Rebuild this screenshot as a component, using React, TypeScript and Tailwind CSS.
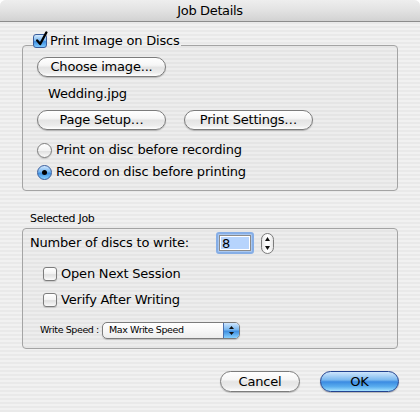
import React from 'react';

const pill =
  'flex items-center justify-center rounded-full border border-[#7c7c7c] bg-[linear-gradient(to_bottom,#ffffff_0%,#f6f6f6_40%,#e4e4e4_52%,#ececec_80%,#ffffff_100%)] shadow-[0_1px_1px_rgba(0,0,0,0.22)] text-black';

const CheckBox: React.FC<{ checked?: boolean }> = ({ checked }) =>
  checked ? (
    <span className="relative block w-[14px] h-[14px] shrink-0 rounded-[3px] border border-[#3a5d9c] bg-[linear-gradient(to_bottom,#d4ebff_0%,#7db9f0_45%,#3f8fe0_55%,#7fcaff_100%)]">
      <svg className="absolute left-[1px] top-[-4px]" width="13" height="16" viewBox="0 0 13 16">
        <path d="M2.2 9.4 L5.2 13 L11.4 1.4" stroke="#000" strokeWidth="2.3" fill="none" strokeLinecap="round" strokeLinejoin="round" />
      </svg>
    </span>
  ) : (
    <span className="block w-[14px] h-[14px] shrink-0 rounded-[3px] border border-[#7d7d7d] bg-[linear-gradient(to_bottom,#ffffff_0%,#f2f2f2_50%,#e0e0e0_55%,#fafafa_100%)] shadow-[0_1px_1px_rgba(0,0,0,0.15)]" />
  );

const Radio: React.FC<{ on?: boolean }> = ({ on }) =>
  on ? (
    <span className="flex items-center justify-center w-[15px] h-[15px] shrink-0 rounded-full border border-[#3a5d9c] bg-[linear-gradient(to_bottom,#cfe7ff_0%,#76b5ef_45%,#3f8fe0_55%,#86d0ff_100%)]">
      <span className="block w-[5px] h-[5px] rounded-full bg-black" />
    </span>
  ) : (
    <span className="block w-[15px] h-[15px] shrink-0 rounded-full border border-[#7d7d7d] bg-[linear-gradient(to_bottom,#ffffff_0%,#f2f2f2_50%,#e0e0e0_55%,#fafafa_100%)] shadow-[0_1px_1px_rgba(0,0,0,0.15)]" />
  );

export default function App() {
  return (
    <div className="w-[420px] h-[412px] bg-white font-['DejaVu_Sans',sans-serif] text-[13px] tracking-[-0.2px] text-black overflow-hidden">
      <div className="w-full h-full rounded-t-[6px] overflow-hidden flex flex-col bg-[repeating-linear-gradient(to_bottom,#f1f1f1_0px,#f1f1f1_2px,#e9e9e9_2px,#e9e9e9_4px)]">
        <div className="h-[22px] shrink-0 flex items-center justify-center border-b border-[#8c8c8c] bg-[linear-gradient(to_bottom,#eeeeee_0%,#e2e2e2_50%,#d2d2d2_100%)] tracking-[-0.35px]">
          Job Details
        </div>

        <fieldset className="mx-[22px] mt-[12px] rounded-[4px] border border-[#a4a4a4] bg-black/[0.015]">
          <legend className="ml-[10px] pb-[8px] pr-[1px]">
            <div className="flex items-center h-[14px] gap-[3px]">
              <CheckBox checked />
              <span>Print Image on Discs</span>
            </div>
          </legend>
          <div className="flex flex-col pl-[14px] pb-[10px]">
            <button className={`${pill} mt-[1px] w-[129px] h-[20px]`}>Choose image...</button>
            <div className="mt-[9px] h-[16px] leading-[16px] pl-[11px]">Wedding.jpg</div>
            <div className="mt-[8px] flex gap-[18px]">
              <button className={`${pill} w-[129px] h-[20px]`}>Page Setup…</button>
              <button className={`${pill} w-[129px] h-[20px]`}>Print Settings…</button>
            </div>
            <div className="mt-[12px] h-[16px] flex items-center gap-[4px]">
              <Radio />
              <span>Print on disc before recording</span>
            </div>
            <div className="mt-[6px] h-[16px] flex items-center gap-[4px]">
              <Radio on />
              <span>Record on disc before printing</span>
            </div>
          </div>
        </fieldset>

        <div className="mx-[22px] mt-[21px] pl-[8px] h-[14px] leading-[14px] text-[11px] tracking-[-0.3px]">Selected Job</div>
        <div className="mx-[22px] mt-[2px] rounded-[4px] border border-[#a4a4a4] bg-black/[0.015] flex flex-col pt-[3px] pb-[9px] pl-[7px]">
          <div className="h-[22px] flex items-center">
            <span className="w-[186px] whitespace-nowrap">Number of discs to write:</span>
            <div className="w-[38px] h-[22px] rounded-[3px] border-[2px] border-[#86aee6] p-[1px] bg-[#aac8f0]">
              <div className="w-full h-full border border-[#8a8a8a] bg-white p-[1px]">
                <div className="w-full h-full bg-[#b6d4fd] flex items-center pl-[1px] leading-none">8</div>
              </div>
            </div>
            <div className="ml-[7px] w-[13px] h-[21px] rounded-full border border-[#7c7c7c] bg-[linear-gradient(to_right,#e6e6e6_0%,#ffffff_40%,#ffffff_60%,#e6e6e6_100%)] flex flex-col items-center justify-center gap-[5px]">
              <svg width="5" height="4" viewBox="0 0 5 4"><path d="M2.5 0 L5 4 L0 4 Z" fill="#111" /></svg>
              <svg width="5" height="4" viewBox="0 0 5 4"><path d="M0 0 L5 0 L2.5 4 Z" fill="#111" /></svg>
            </div>
          </div>
          <div className="mt-[12px] h-[16px] pl-[13px] flex items-center gap-[4px]">
            <CheckBox />
            <span>Open Next Session</span>
          </div>
          <div className="mt-[10px] h-[16px] pl-[13px] flex items-center gap-[4px]">
            <CheckBox />
            <span>Verify After Writing</span>
          </div>
          <div className="mt-[13px] h-[18px] pl-[10px] flex items-center text-[9.5px] tracking-[-0.4px]">
            <span className="w-[62px] shrink-0 whitespace-nowrap">Write Speed :</span>
            <div className="w-[138px] h-[17px] rounded-[5px] border border-[#7c7c7c] bg-[linear-gradient(to_bottom,#ffffff_0%,#f7f7f7_50%,#ececec_100%)] shadow-[0_1px_1px_rgba(0,0,0,0.18)] flex overflow-hidden">
              <span className="flex-1 pl-[6px] flex items-center whitespace-nowrap">Max Write Speed</span>
              <span className="w-[16px] border-l border-[#4a6fae] bg-[linear-gradient(to_bottom,#cfe7ff_0%,#76b5ef_45%,#3f8fe0_55%,#86d0ff_100%)] flex flex-col items-center justify-center gap-[3px]">
                <svg width="5" height="3" viewBox="0 0 5 3"><path d="M2.5 0 L5 3 L0 3 Z" fill="#111" /></svg>
                <svg width="5" height="3" viewBox="0 0 5 3"><path d="M0 0 L5 0 L2.5 3 Z" fill="#111" /></svg>
              </span>
            </div>
          </div>
        </div>

        <div className="mt-[22px] mr-[21px] flex justify-end gap-[20px]">
          <button className={`${pill} w-[80px] h-[21px]`}>Cancel</button>
          <button className="flex items-center justify-center w-[79px] h-[21px] rounded-full border border-[#22428f] bg-[linear-gradient(to_bottom,#cfe6fc_0%,#7ab8ef_42%,#3b8be2_52%,#5cafef_78%,#a6e3ff_100%)] shadow-[0_1px_1px_rgba(0,0,0,0.25)] text-black">
            OK
          </button>
        </div>
      </div>
    </div>
  );
}
